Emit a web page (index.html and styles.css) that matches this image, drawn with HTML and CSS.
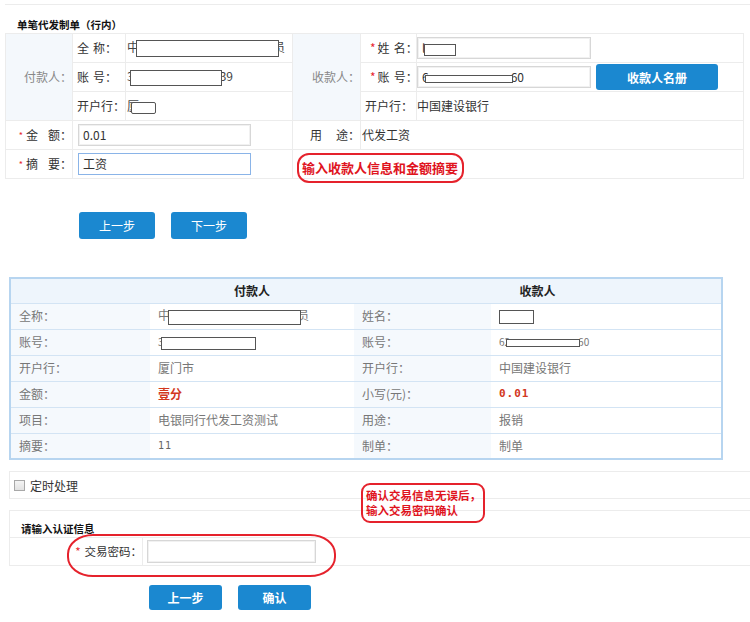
FILE: index.html
```html
<!DOCTYPE html>
<html lang="zh-CN">
<head>
<meta charset="utf-8">
<title>单笔代发制单</title>
<link rel="stylesheet" href="styles.css">
</head>
<body>
<div class="page">
  <section class="form-sec">
    <h2 class="sec-title">单笔代发制单（行内）</h2>
    <table class="form-table">
      <colgroup>
        <col class="w67"><col class="w53"><col class="w167"><col class="w68"><col class="w56"><col class="w327">
      </colgroup>
      <tr>
        <td rowspan="3" class="side">付款人：</td>
        <td class="sub">全<span class="sp4"></span>称：</td>
        <td class="val">中<i class="mask m1"></i>员</td>
        <td rowspan="3" class="side">收款人：</td>
        <td class="rlabel"><em>*</em>姓<span class="sp4"></span>名：</td>
        <td class="rval"><div class="ipt ipt-r">l<i class="mask m4"></i></div></td>
      </tr>
      <tr>
        <td class="sub">账<span class="sp4"></span>号：</td>
        <td class="val">3<i class="mask m2"></i>39</td>
        <td class="rlabel"><em>*</em>账<span class="sp4"></span>号：</td>
        <td class="rval">
          <div class="rowflex">
            <div class="ipt ipt-r">6<i class="mask m5"></i>60</div>
            <button class="btn btn-book">收款人名册</button>
          </div>
        </td>
      </tr>
      <tr>
        <td class="sub">开户行：</td>
        <td class="val">厦<i class="mask m3"></i></td>
        <td class="rlabel2">开户行：</td>
        <td class="rval">中国建设银行</td>
      </tr>
      <tr>
        <td class="req"><em>*</em>金<span class="sp10"></span>额：</td>
        <td colspan="2" class="ipt-cell"><div class="ipt ipt-l">0.01</div></td>
        <td class="mid-label">用<span class="sp14"></span>途：</td>
        <td colspan="2" class="rval-t">代发工资</td>
      </tr>
      <tr>
        <td class="req"><em>*</em>摘<span class="sp10"></span>要：</td>
        <td colspan="2" class="ipt-cell"><div class="ipt ipt-l focus">工资</div></td>
        <td colspan="3"></td>
      </tr>
    </table>
  </section>

  <div class="steps steps-top">
    <button class="btn btn-step">上一步</button>
    <button class="btn btn-step">下一步</button>
  </div>

  <table class="confirm-table">
    <colgroup>
      <col class="w140"><col class="w204"><col class="w137"><col class="w231">
    </colgroup>
    <tr class="head">
      <th></th>
      <th>付款人</th>
      <th colspan="2">收款人</th>
    </tr>
    <tr>
      <td class="lbl">全称：</td>
      <td class="v">中<i class="mask m6"></i>员</td>
      <td class="lbl">姓名：</td>
      <td class="v"><i class="mask m7"></i></td>
    </tr>
    <tr>
      <td class="lbl">账号：</td>
      <td class="v num">3<i class="mask m8"></i></td>
      <td class="lbl">账号：</td>
      <td class="v num">62<i class="mask m9"></i>60</td>
    </tr>
    <tr>
      <td class="lbl">开户行：</td>
      <td class="v">厦门市</td>
      <td class="lbl">开户行：</td>
      <td class="v">中国建设银行</td>
    </tr>
    <tr>
      <td class="lbl">金额：</td>
      <td class="v red">壹分</td>
      <td class="lbl">小写(元)：</td>
      <td class="v red mono">0.01</td>
    </tr>
    <tr>
      <td class="lbl">项目：</td>
      <td class="v">电银同行代发工资测试</td>
      <td class="lbl">用途：</td>
      <td class="v">报销</td>
    </tr>
    <tr>
      <td class="lbl">摘要：</td>
      <td class="v mono small">11</td>
      <td class="lbl">制单：</td>
      <td class="v">制单</td>
    </tr>
  </table>

  <div class="box timer">
    <span class="chk"></span><span class="chk-text">定时处理</span>
  </div>

  <div class="box auth">
    <h3 class="auth-title">请输入认证信息</h3>
    <div class="auth-row">
      <div class="auth-label"><em>*</em>交易密码：</div>
      <div class="auth-val"><div class="ipt ipt-pwd"></div></div>
    </div>
  </div>

  <div class="steps steps-bottom">
    <button class="btn btn-step2">上一步</button>
    <button class="btn btn-step2">确认</button>
  </div>

  <div class="note note1">输入收款人信息和金额摘要</div>
  <div class="note note2">确认交易信息无误后，<br>输入交易密码确认</div>
  <div class="ring"></div>
</div>
</body>
</html>
```

FILE: styles.css
```css
* { box-sizing: border-box; }
html, body { margin: 0; padding: 0; background: #fff; }
body {
  width: 750px;
  height: 622px;
  overflow: hidden;
  font-family: "Noto Sans CJK SC", "Liberation Sans", sans-serif;
  font-size: 12px;
  color: #333;
}
.page { position: relative; width: 750px; height: 622px; }

.sp4 { display: inline-block; width: 4px; }
.sp10 { display: inline-block; width: 10px; }
.sp14 { display: inline-block; width: 14px; }

/* ---------- top form ---------- */
.form-sec {
  margin: 4px 0 0 5px;
  border-top: 1px solid #ececec;
}
.sec-title {
  margin: 0;
  height: 28px;
  padding: 13px 0 0 12px;
  font-size: 10.5px;
  line-height: 14px;
  font-weight: bold;
  color: #111;
}
.form-table {
  border-collapse: collapse;
  table-layout: fixed;
  width: 738px;
}
.w67 { width: 67px; } .w53 { width: 53px; } .w167 { width: 167px; }
.w68 { width: 68px; } .w56 { width: 56px; } .w327 { width: 327px; }
.form-table td {
  border: 1px solid #ececec;
  height: 29px;
  padding: 0;
  white-space: nowrap;
  line-height: 16px;
}
.form-table .side {
  background: #f4f8fc;
  color: #888;
  text-align: right;
  padding-right: 0;
}
.form-table .sub { padding-left: 4px; color: #333; }
.form-table .val { padding-left: 1px; color: #444; }
.form-table .rlabel { padding-left: 9px; }
.form-table .rlabel2 { padding-left: 4px; }
.form-table .rval { padding-left: 0; }
.form-table .rval-t { padding-left: 1px; }
.form-table .req { text-align: right; padding-right: 0; }
.form-table .mid-label { text-align: right; padding-right: 0; }
em { font-style: normal; color: #e8262f; margin-right: 2px; }
.req em { font-size: 9px; margin-right: 3px; vertical-align: 1px; }

.ipt {
  height: 22px;
  border: 1px solid #d7d7d7;
  box-shadow: inset 0 0 0 1px #f1f1f1;
  background: #fff;
  padding: 0 0 0 4px;
  line-height: 20px;
  font-size: 12px;
  color: #333;
  white-space: nowrap;
  overflow: hidden;
}
.ipt-r { width: 174px; }
.ipt-l { width: 173px; margin-left: 5px; }
.ipt-l.focus { border-color: #8ab4e8; box-shadow: none; }
.rowflex { display: flex; align-items: center; gap: 5px; }

.mask {
  display: inline-block;
  position: relative;
  background: #fff;
  border: 1px solid #555;
  vertical-align: middle;
}
.m1 { width: 143px; height: 17px; margin: 0 -6px 0 -3px; }
.m2 { width: 92px; height: 16px; margin: 0 -2px 0 -4px; }
.m3 { width: 25px; height: 12px; margin-left: -8px; border-radius: 2px; }
.m4 { width: 32px; height: 12px; margin-left: -1px; }
.m5 { width: 88px; height: 8px; margin: 0 -2px 0 -4px; }
.m6 { width: 133px; height: 15px; margin: 0 -4px 0 -2px; }
.m7 { width: 35px; height: 14px; }
.m8 { width: 95px; height: 13px; margin-left: -3px; }
.m9 { width: 74px; height: 8px; margin: 0 -2px 0 -4px; }

.btn {
  border: 0;
  border-radius: 3px;
  background: #1b88d0;
  color: #fff;
  font-family: inherit;
  font-size: 12px;
  font-weight: bold;
  padding: 0;
  cursor: pointer;
}
.btn-book { width: 122px; height: 26px; }

.steps { display: flex; gap: 16px; }
.steps-top { margin-top: 33px; padding-left: 79px; }
.btn-step { width: 76px; height: 27px; font-weight: normal; }
.steps-bottom { margin-top: 19px; padding-left: 149px; }
.btn-step2 { width: 73px; height: 25px; }

/* ---------- confirm table ---------- */
.confirm-table {
  margin: 38px 0 0 9px;
  width: 712px;
  border-collapse: collapse;
  table-layout: fixed;
  border: 2px solid #b7d5f0;
}
.w140 { width: 140px; } .w204 { width: 204px; } .w137 { width: 137px; } .w231 { width: 231px; }
.confirm-table th, .confirm-table td {
  border-top: 1px solid #d3e4f4;
  border-bottom: 1px solid #d3e4f4;
  height: 26px;
  padding: 0 0 0 8px;
  white-space: nowrap;
  line-height: 16px;
  font-size: 12px;
}
.confirm-table .head th {
  background: #eef5fc;
  color: #222;
  font-weight: bold;
  text-align: center;
  height: 25px;
  padding: 0;
}
.confirm-table .lbl { background: #f5f9fd; color: #777; }
.confirm-table .v { background: #fff; color: #777; }
.confirm-table .num { font-size: 10px; }
.confirm-table .red { color: #d2381e; font-weight: bold; }
.confirm-table .mono { font-family: "DejaVu Sans Mono", "Liberation Mono", monospace; font-size: 11px; letter-spacing: 1px; }
.confirm-table .small { font-size: 10px; color: #666; font-weight: normal; }

/* ---------- boxes ---------- */
.box {
  margin-left: 9px;
  width: 745px;
  border: 1px solid #ececec;
  border-right: 0;
}
.timer {
  margin-top: 11px;
  height: 28px;
  display: flex;
  align-items: center;
  padding-left: 4px;
}
.chk {
  width: 11px; height: 11px;
  border: 1px solid #a8a8a8;
  background: linear-gradient(#f4f4f4, #e2e2e2);
  margin-right: 5px;
}
.chk-text { color: #333; }

.auth { margin-top: 11px; }
.auth-title {
  margin: 0;
  height: 27px;
  padding: 11px 0 0 11px;
  font-size: 10.5px;
  line-height: 14px;
  font-weight: bold;
  color: #111;
  border-bottom: 1px solid #ececec;
}
.auth-row { display: flex; height: 27px; }
.auth-label {
  width: 133px;
  text-align: right;
  line-height: 27px;
  border-right: 1px solid #ececec;
  padding-right: 0;
  font-size: 11.5px;
}
.auth-label em { margin-right: 4px; }
.auth-val { padding: 2px 0 0 4px; }
.ipt-pwd { width: 169px; height: 23px; }

/* ---------- annotations ---------- */
.note {
  position: absolute;
  border: 2px solid #e5222c;
  color: #e0141e;
  font-weight: bold;
  font-family: "Noto Sans CJK SC", sans-serif;
}
.note1 {
  left: 297px; top: 149px;
  width: 167px; height: 30px;
  border-radius: 12px;
  font-size: 13px;
  line-height: 26px;
  padding-left: 3px;
}
.note2 {
  left: 361px; top: 479px;
  width: 124px; height: 40px;
  border-radius: 9px;
  font-size: 11.5px;
  line-height: 15px;
  padding: 3px 0 0 3px;
  white-space: nowrap;
}
.ring {
  position: absolute;
  left: 67px; top: 530px;
  width: 269px; height: 43px;
  border: 2px solid #e5222c;
  border-radius: 26px / 20px;
}
```
